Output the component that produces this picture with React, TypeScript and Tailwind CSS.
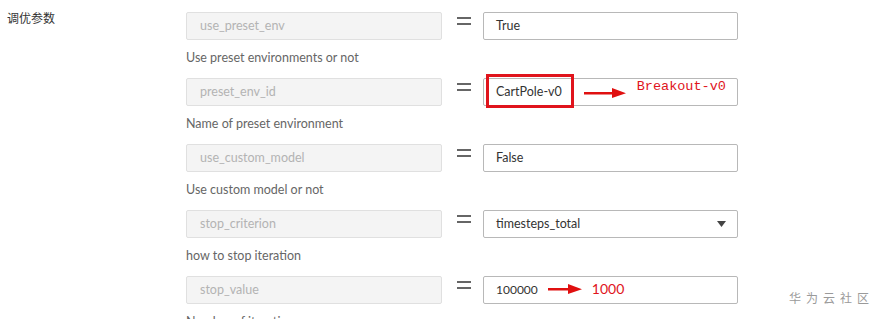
import React from 'react';

const rows = [
  { key: 'use_preset_env', value: 'True', desc: 'Use preset environments or not' },
  { key: 'preset_env_id', value: 'CartPole-v0', desc: 'Name of preset environment', note: 'env' },
  { key: 'use_custom_model', value: 'False', desc: 'Use custom model or not' },
  { key: 'stop_criterion', value: 'timesteps_total', desc: 'how to stop iteration', select: true },
  { key: 'stop_value', value: '100000', desc: 'Number of iterations', note: 'stop' },
];

function Arrow({ w }: { w: number }) {
  return (
    <svg width={w} height="12" viewBox={`0 0 ${w} 12`} className="shrink-0">
      <rect x="0" y="5" width={w - 12} height="2.5" fill="#e01010" />
      <polygon points={`${w - 14},1 ${w},6.2 ${w - 14},11`} fill="#e01010" />
    </svg>
  );
}

function Equals() {
  return (
    <svg width="14" height="10" viewBox="0 0 14 10" className="shrink-0">
      <rect x="0" y="1" width="14" height="2" fill="#666" />
      <rect x="0" y="7" width="14" height="2" fill="#666" />
    </svg>
  );
}

export default function App() {
  return (
    <div className="relative w-[886px] h-[319px] overflow-hidden bg-white font-['Lato','Noto_Sans_CJK_SC',sans-serif] text-[12.5px] whitespace-nowrap">
      <div className="flex">
        <div className="w-[186px] shrink-0 pl-[7px] pt-[9px] text-[12px] text-[#333] font-['Noto_Sans_CJK_SC',sans-serif]">调优参数</div>
        <div className="flex flex-col pt-[12px]">
          {rows.map((r) => (
            <div key={r.key} className="flex flex-col">
              <div className="flex items-center h-[28px]">
                <div className="w-[256px] h-[28px] flex items-center pl-[13px] bg-[#f4f4f4] border border-[#e0e0e0] rounded-[2px] text-[#b3b3b3]">
                  {r.key}
                </div>
                <div className="ml-[15px] mr-[12px] -mt-[10px]">
                  <Equals />
                </div>
                <div className="relative w-[255px] h-[28px] flex items-center pl-[12px] pr-[12px] border border-[#b8b8b8] rounded-[2px] text-[#333]">
                  {r.note === 'env' ? (
                    <>
                      <div className="absolute left-[2px] top-[-5px] w-[88px] h-[34px] border-[3px] border-[#e0141c]" />
                      <span className="relative">{r.value}</span>
                      <span className="ml-[22px] mt-[2px]"><Arrow w={42} /></span>
                      <span className="ml-[11px] -mt-[10px] text-[13.5px] text-[#e0141c] font-['Liberation_Mono',monospace]">Breakout-v0</span>
                    </>
                  ) : r.note === 'stop' ? (
                    <>
                      <span className="text-[12px]">{r.value}</span>
                      <span className="ml-[10px] -mt-[3px]"><Arrow w={34} /></span>
                      <span className="ml-[10px] -mt-[4px] text-[14px] text-[#e0141c]">1000</span>
                    </>
                  ) : (
                    <span>{r.value}</span>
                  )}
                  {r.select && (
                    <svg width="9" height="6" viewBox="0 0 9 6" className="ml-auto mr-[-1px]">
                      <polygon points="0,0 9,0 4.5,6" fill="#444" />
                    </svg>
                  )}
                </div>
              </div>
              <div className="mt-[10px] mb-[12px] leading-[16px] text-[#666]">{r.desc}</div>
            </div>
          ))}
        </div>
      </div>
      <div className="absolute left-[789px] top-[289px] text-[12px] tracking-[5px] text-[#9a9a9a] font-['Noto_Sans_CJK_SC',sans-serif]">华为云社区</div>
    </div>
  );
}
